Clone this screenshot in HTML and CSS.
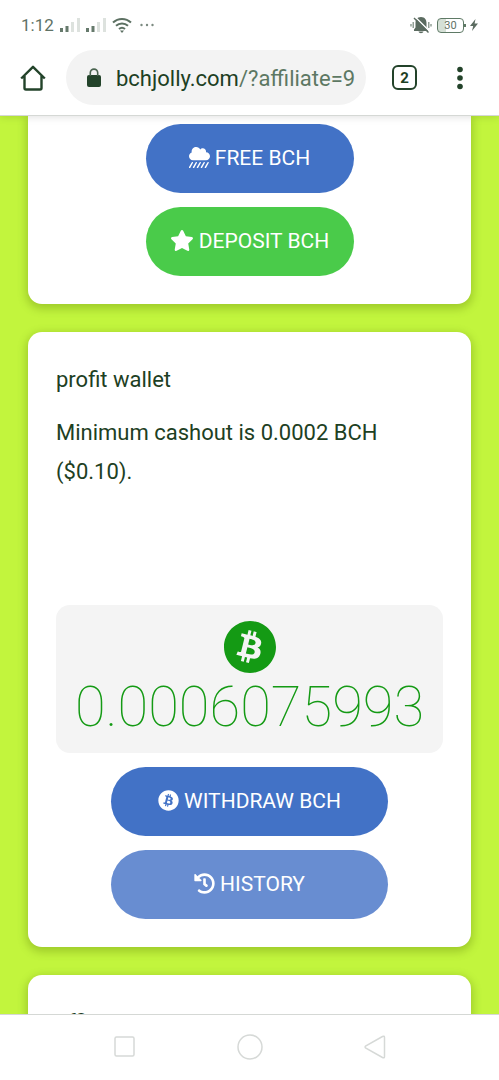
FILE: index.html
```
<!DOCTYPE html>
<html lang="en">
<head>
<meta charset="utf-8">
<meta name="viewport" content="width=device-width, initial-scale=1">
<title>bchjolly.com</title>
<link rel="stylesheet" href="styles.css">
</head>
<body>
<div class="phone">
  <header class="chrome">
    <div class="status">
      <span class="clock">1:12</span>
      <svg class="signal" width="21" height="16" viewBox="0 0 21 16"><path fill="#667a6c" d="M0 11h3v4H0zM5.500 9h3v6h-3z"/><path fill="#dde2de" d="M11 5h3v10h-3zM17 1h3v14h-3z"/></svg>
      <svg class="signal" width="21" height="16" viewBox="0 0 21 16"><path fill="#667a6c" d="M0 11h3v4H0zM5.500 9h3v6h-3z"/><path fill="#dde2de" d="M11 5h3v10h-3zM17 1h3v14h-3z"/></svg>
      <svg class="wifi" width="20" height="16" viewBox="0 0 20 16" fill="none" stroke="#5c7062" stroke-width="2"><path d="M1 5.500a13 13 0 0 1 18 0M4 8.800a8.800 8.800 0 0 1 12 0M7 12a4.600 4.600 0 0 1 6 0"/><path fill="#5c7062" stroke="none" d="M8 13.500h4L10 16z"/></svg>
      <svg class="more" width="14" height="4" viewBox="0 0 14 4" fill="#7b8a80"><circle cx="1.500" cy="2" r="1.200"/><circle cx="7" cy="2" r="1.200"/><circle cx="12.500" cy="2" r="1.200"/></svg>
      <span class="spacer"></span>
      <svg class="mute" width="22" height="18" viewBox="0 0 22 18"><path fill="#5b6b60" d="M11 1C7 1 5.500 4 5.500 7v4.500L4 13.500V15h14v-1.500l-1.500-2V7C16.500 4 15 1 11 1zM8.500 15.500h5c-.5 2.300-4.500 2.300-5 0z"/><path d="M5.500 1.200l14 14" stroke="#fff" stroke-width="1.400"/><path d="M4 2l14.500 14.500" stroke="#5b6b60" stroke-width="1.400"/><path d="M3.200 6v6M1 8v2.500M18.800 6v6M21 8v2.500" stroke="#76877b" stroke-width="1.200"/></svg>
      <span class="battery">30</span>
      <svg class="bolt" width="8" height="12" viewBox="0 0 8 12"><path fill="#5b6b60" d="M5.500 0L0 7h3.200L2 12l6-7.500H4.600z"/></svg>
    </div>
    <div class="toolbar">
      <button class="icon-btn" aria-label="Home"><svg width="26" height="26" viewBox="0 0 26 26" fill="none" stroke="#23432a" stroke-width="2.400" stroke-linejoin="round"><path d="M1.200 13.500L13 1.800l11.800 11.700M4.500 11v12q0 1.500 1.500 1.500h14q1.500 0 1.500-1.500V11"/></svg></button>
      <a class="address" href="#">
        <svg width="16" height="20" viewBox="0 0 16 20"><rect x="1" y="7" width="14" height="12" rx="2" fill="#23432a"/><path d="M4.300 8V4.800a3.700 3.700 0 0 1 7.400 0V8" fill="none" stroke="#4a6450" stroke-width="1.600"/></svg>
        <span class="url">bchjolly.com<span class="path">/?affiliate=9</span></span>
      </a>
      <button class="tabs" aria-label="Open tabs">2</button>
      <button class="menu" aria-label="Menu"><svg width="8" height="24" viewBox="0 0 8 24" fill="#23432a"><circle cx="4" cy="3.500" r="2.800"/><circle cx="4" cy="12" r="2.800"/><circle cx="4" cy="20.500" r="2.800"/></svg></button>
    </div>
  </header>

  <main class="page">
    <section class="card card-top">
      <button class="btn blue"><svg class="ic" viewBox="0 0 512 512"><path fill="currentColor" d="M416 128c-.6 0-1.100.2-1.600.2 1.100-5.200 1.600-10.600 1.600-16.200 0-44.200-35.800-80-80-80-24.600 0-46.300 11.300-61 28.800C256.400 24.800 219.300 0 176 0 114.100 0 64 50.100 64 112c0 7.300.8 14.300 2.100 21.200C27.800 145.800 0 181.500 0 224c0 53 43 96 96 96h320c53 0 96-43 96-96s-43-96-96-96z"/><path stroke="currentColor" stroke-width="36" stroke-linecap="round" d="M80 384L16 496M176 384l-64 112M272 384l-64 112M368 384l-64 112M464 384l-64 112"/></svg>FREE BCH</button>
      <button class="btn green"><svg class="ic star" viewBox="0 0 576 512"><path fill="currentColor" d="M259.300 17.800L194 150.200 47.900 171.500c-26.200 3.800-36.700 36.100-17.700 54.600l105.700 103-25 145.500c-4.500 26.300 23.200 46 46.400 33.700L288 439.600l130.700 68.700c23.200 12.200 50.900-7.400 46.400-33.700l-25-145.500 105.700-103c19-18.500 8.500-50.800-17.700-54.600L382 150.200 316.700 17.800c-11.700-23.600-45.600-23.900-57.400 0z"/></svg>DEPOSIT BCH</button>
    </section>

    <section class="card">
      <p>profit wallet</p>
      <p>Minimum cashout is 0.0002 BCH ($0.10).</p>
      <div class="balance">
        <svg class="coin" viewBox="8 8 496 496"><path id="coin" fill="currentColor" d="M504 256c0 136.967-111.033 248-248 248S8 392.967 8 256 119.033 8 256 8s248 111.033 248 248zm-141.651-35.330c4.937-32.999-20.191-50.739-54.550-62.573l11.146-44.702-27.213-6.781-10.851 43.524c-7.154-1.783-14.502-3.464-21.803-5.130l10.929-43.810-27.198-6.781-11.153 44.686c-5.922-1.349-11.735-2.682-17.377-4.084l.031-.140-37.530-9.370-7.239 29.062s20.191 4.627 19.765 4.913c11.022 2.751 13.014 10.044 12.680 15.825l-12.696 50.925c.760.194 1.744.473 2.829.907-.907-.225-1.876-.473-2.876-.713l-17.796 71.338c-1.349 3.348-4.767 8.370-12.471 6.464.271.395-19.780-4.937-19.780-4.937l-13.510 31.147 35.414 8.827c6.588 1.651 13.045 3.379 19.400 5.006l-11.262 45.213 27.182 6.781 11.153-44.733a1038.209 1038.209 0 0 0 21.687 5.627l-11.115 44.523 27.213 6.781 11.262-45.128c46.404 8.781 81.299 5.239 95.986-36.727 11.834-33.790-.589-53.281-25.004-65.991 17.780-4.098 31.174-15.792 34.747-39.949zm-62.177 87.179c-8.410 33.790-65.308 15.523-83.755 10.943l14.944-59.899c18.446 4.603 77.600 13.717 68.811 48.956zm8.417-87.667c-7.673 30.736-55.031 15.120-70.393 11.292l13.548-54.327c15.363 3.828 64.836 10.973 56.845 43.035z"/></svg>
        <span class="amount">0.0006075993</span>
      </div>
      <button class="btn wide blue"><svg class="ic" viewBox="0 0 512 512"><use href="#coin"/></svg>WITHDRAW BCH</button>
      <button class="btn wide pale"><svg class="ic" viewBox="0 0 512 512"><path fill="currentColor" d="M504 255.531c.253 136.640-111.180 248.372-247.820 248.468-59.015.042-113.223-20.530-155.822-54.911-11.077-8.940-11.905-25.541-1.839-35.607l11.267-11.267c8.609-8.609 22.353-9.551 31.891-1.984C173.062 425.135 212.781 440 256 440c101.705 0 184-82.311 184-184 0-101.705-82.311-184-184-184-48.814 0-93.149 18.969-126.068 49.932l50.754 50.754c10.080 10.080 2.941 27.314-11.313 27.314H24c-8.837 0-16-7.163-16-16V38.627c0-14.254 17.234-21.393 27.314-11.314l49.372 49.372C129.209 34.136 189.552 8 256 8c136.810 0 247.747 110.780 248 247.531zm-180.912 78.784l9.823-12.630c8.138-10.463 6.253-25.542-4.210-33.679L288 256.349V152c0-13.255-10.745-24-24-24h-16c-13.255 0-24 10.745-24 24v135.651l65.409 50.874c10.463 8.137 25.541 6.253 33.679-4.210z"/></svg>HISTORY</button>
    </section>

    <section class="card">
      <p>affiliate wallet</p>
    </section>
  </main>

  <nav class="navbar">
    <button aria-label="Recent apps"><svg width="26" height="26" viewBox="0 0 26 26"><rect x="3" y="3" width="19" height="19" rx="1.500"/></svg></button>
    <button aria-label="Home screen"><svg width="26" height="26" viewBox="0 0 26 26"><circle cx="13" cy="13" r="12"/></svg></button>
    <button aria-label="Back"><svg width="26" height="26" viewBox="0 0 26 26"><path d="M3.500 12Q2.500 13 3.500 14L20.500 23.500Q22.500 24.500 22.500 22.500V3.500Q22.500 1.500 20.500 2.500z"/></svg></button>
  </nav>
</div>
</body>
</html>
```
FILE: styles.css
```
* { box-sizing: border-box; }
body {
  margin: 0;
  font-family: Roboto, "Liberation Sans", sans-serif;
  color: #1d4023;
}
button {
  border: 0;
  padding: 0;
  background: none;
  font-family: inherit;
  color: inherit;
}
svg { display: block; flex: none; }
.phone {
  display: flex;
  flex-direction: column;
  height: 100vh;
  overflow: hidden;
}

.chrome {
  position: relative;
  z-index: 1;
  flex: none;
  background: #fff;
  border-bottom: 1px solid #d5d8d5;
  box-shadow: 0 1px 8px rgba(0, 0, 0, 0.12);
}
.status {
  display: flex;
  align-items: center;
  height: 50px;
  padding: 0 21px;
  color: #5f7265;
}
.clock { font-size: 17px; margin-right: 6px; }
.signal { margin-right: 5px; }
.more { margin-left: 8px; }
.spacer { flex: 1; }
.mute { margin-right: 5px; }
.battery {
  position: relative;
  width: 27px;
  height: 15px;
  margin-right: 6px;
  border: 1px solid #5f7a66;
  border-radius: 4px;
  background: linear-gradient(90deg, #d5e0d6 8px, #fff 8px);
  font-size: 11px;
  line-height: 13px;
  text-align: center;
}
.battery::after {
  content: "";
  position: absolute;
  right: -3px;
  top: 5px;
  width: 2px;
  height: 3px;
  background: #5f7a66;
}
.toolbar {
  display: flex;
  align-items: center;
  height: 65px;
  padding: 0 35px 10px 20px;
}
.address {
  display: flex;
  flex: 1;
  align-items: center;
  gap: 14px;
  min-width: 0;
  height: 55px;
  margin: 0 26px 0 20px;
  padding: 0 8px 0 20px;
  border-radius: 28px;
  background: #f3f3f3;
  color: #1d4023;
  text-decoration: none;
}
.url {
  padding-top: 2px;
  font-size: 22px;
  line-height: 32px;
  white-space: nowrap;
}
.path { color: #5d7863; }
.tabs {
  width: 25px;
  height: 25px;
  border: 2px solid #23432a;
  border-radius: 6px;
  font-size: 15px;
  font-weight: 700;
}
.menu { margin-left: 39px; }

.page {
  display: flex;
  flex: 1;
  flex-direction: column;
  gap: 28px;
  min-height: 0;
  padding: 0 28px;
  overflow: hidden;
  background: #c2f53d;
}
.card {
  display: flex;
  flex: none;
  flex-direction: column;
  align-items: center;
  gap: 14px;
  padding: 28px;
  border-radius: 14px;
  background: #fff;
  box-shadow: 0 3px 8px 2px rgba(80, 110, 0, 0.3);
}
.card-top {
  padding-top: 8px;
  border-radius: 0 0 14px 14px;
}
.card p {
  align-self: stretch;
  margin: 0;
  font-size: 22px;
  line-height: 39px;
}
.balance {
  display: flex;
  flex-direction: column;
  align-items: center;
  align-self: stretch;
  margin-top: 100px;
  padding: 16px 0 12px;
  border-radius: 14px;
  background: #f4f4f4;
  color: #149a14;
}
.coin { width: 52px; height: 52px; }
.amount {
  font-size: 56px;
  font-weight: 100;
  line-height: 68px;
}
.btn {
  display: flex;
  align-items: center;
  justify-content: center;
  gap: 5px;
  width: 208px;
  height: 69px;
  padding-bottom: 2px;
  border-radius: 35px;
  color: #fff;
  font-size: 21px;
}
.wide { width: 277px; }
.blue { background: #4272c6; }
.green { background: #4acb4a; }
.pale { background: #688dd1; }
.ic { width: 21px; height: 21px; }
.star { width: 24px; }

.navbar {
  display: flex;
  flex: none;
  align-items: center;
  justify-content: center;
  gap: 99px;
  height: 66px;
  padding-bottom: 2px;
  border-top: 1px solid #d5d8d5;
  background: #fff;
}
.navbar svg { fill: none; stroke: #d6d9d7; stroke-width: 1.500; }
```
